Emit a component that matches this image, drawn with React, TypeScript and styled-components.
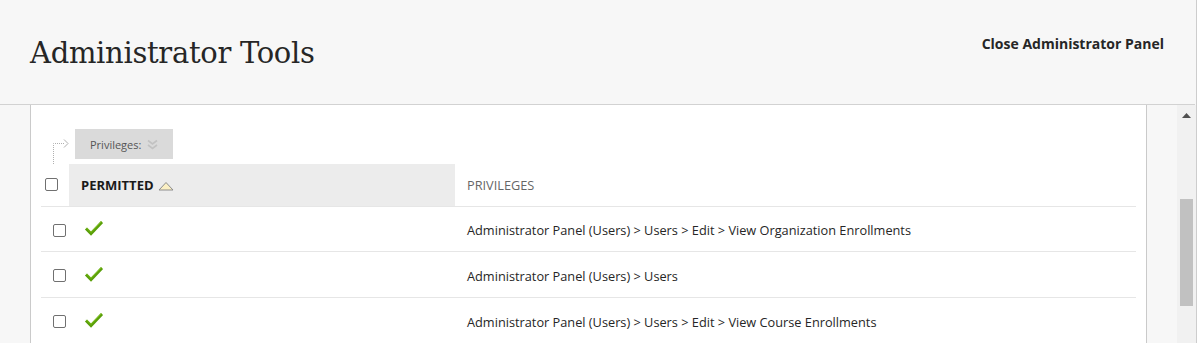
import { createGlobalStyle, styled } from 'styled-components';

const GlobalStyle = createGlobalStyle`
  html, body {
    margin: 0;
    padding: 0;
    background: #f7f7f7;
  }
  body {
    font-family: 'Open Sans', 'Liberation Sans', sans-serif;
    color: #262626;
  }
`;

const Page = styled.div`
  width: 1197px;
  height: 343px;
  box-sizing: border-box;
  border-right: 1px solid #cdcdcd;
  background: #f7f7f7;
  display: flex;
  flex-direction: column;
  overflow: hidden;
`;

const Header = styled.header`
  height: 104px;
  flex: none;
  border-bottom: 1px solid #d2d2d2;
  margin-right: 1px;
  display: flex;
  justify-content: space-between;
  align-items: flex-start;
  padding: 0 31px 0 30px;
`;

const Title = styled.h1`
  margin: 33px 0 0;
  font-family: 'DejaVu Serif', 'Liberation Serif', serif;
  font-weight: 400;
  font-size: 29px;
  letter-spacing: -0.3px;
  line-height: 40px;
  color: #262626;
`;

const CloseLink = styled.a`
  margin-top: 34px;
  font-size: 14px;
  font-weight: 700;
  color: #262626;
  text-decoration: none;
  cursor: pointer;
`;

const Body = styled.div`
  flex: 1;
  display: flex;
  min-height: 0;
`;

const ScrollArea = styled.div`
  flex: 1;
  display: flex;
  padding-left: 30px;
  padding-right: 30px;
`;

const Panel = styled.main`
  flex: 1;
  background: #fff;
  border-left: 1px solid #cacaca;
  border-right: 1px solid #cacaca;
  padding: 24px 10px 0;
`;

const FilterRow = styled.div`
  display: flex;
  align-items: flex-start;
  height: 35px;
`;

const DottedArrow = styled.svg`
  width: 24px;
  height: 26px;
  margin: 9px 0 0 10px;
  flex: none;
`;

const FilterButton = styled.button`
  height: 30px;
  width: 98px;
  border: 0;
  background: #dadada;
  display: flex;
  align-items: center;
  gap: 6px;
  padding: 0 0 0 15px;
  font-family: inherit;
  font-size: 11px;
  color: #555;
  cursor: pointer;
`;

const Table = styled.table`
  width: 100%;
  border-collapse: collapse;
`;

const HeadCell = styled.th<{ $active?: boolean; $width?: number }>`
  height: 42px;
  padding: 0 12px;
  text-align: left;
  font-size: ${(p) => (p.$active ? 13 : 12.75)}px;
  font-weight: ${(p) => (p.$active ? 700 : 400)};
  color: ${(p) => (p.$active ? '#1a1a1a' : '#666')};
  background: ${(p) => (p.$active ? '#ececec' : 'transparent')};
  width: ${(p) => (p.$width ? `${p.$width}px` : 'auto')};
  border-bottom: 1px solid #e6e6e6;
  text-transform: uppercase;
  box-sizing: border-box;
`;

const CheckHeadCell = styled.th`
  width: 28px;
  padding: 0 0 0 4px;
  text-align: left;
  border-bottom: 1px solid #e6e6e6;
  box-sizing: border-box;
`;

const Row = styled.tr`
  height: 45.5px;
  border-bottom: 1px solid #e6e6e6;
  &:last-child {
    border-bottom: 0;
  }
`;

const Cell = styled.td<{ $pad?: number }>`
  padding: 3px 0 0 ${(p) => p.$pad ?? 12}px;
  font-size: 12.75px;
  color: #262626;
  vertical-align: middle;
`;

const Box = styled.span<{ $offset?: number }>`
  display: block;
  width: 11px;
  height: 11px;
  border: 1px solid #707070;
  border-radius: 2px;
  background: #fff;
  margin-left: ${(p) => p.$offset ?? 0}px;
`;

const SortArrow = styled.svg`
  width: 16px;
  height: 10px;
  margin-left: 4px;
  vertical-align: -1px;
`;

const Scrollbar = styled.div`
  width: 19px;
  flex: none;
  background: #f1f1f1;
  display: flex;
  flex-direction: column;
  align-items: center;
`;

const ScrollUp = styled.svg`
  width: 9px;
  height: 5px;
  margin-top: 8px;
`;

const Thumb = styled.div`
  width: 13px;
  height: 107px;
  margin-top: 81px;
  background: #c1c1c1;
`;

const privileges = [
  'Administrator Panel (Users) > Users > Edit > View Organization Enrollments',
  'Administrator Panel (Users) > Users',
  'Administrator Panel (Users) > Users > Edit > View Course Enrollments',
];

function Check() {
  return (
    <svg width='20' height='16' viewBox='0 0 20 16'>
      <path d='M2 8.5 L7 13.5 L18 2' fill='none' stroke='#5a9f0a' strokeWidth='3' />
      <path d='M2.6 7.9 L7 12.3 L17.4 1.4' fill='none' stroke='#7ec11c' strokeWidth='1' />
    </svg>
  );
}

export default function App() {
  return (
    <>
      <GlobalStyle />
      <Page>
        <Header>
          <Title>Administrator Tools</Title>
          <CloseLink>Close Administrator Panel</CloseLink>
        </Header>
        <Body>
          <ScrollArea>
            <Panel>
              <FilterRow>
                <DottedArrow viewBox='0 0 24 26'>
                  <path
                    d='M2.5 26 V5.5 H14'
                    fill='none'
                    stroke='#b0b0b0'
                    strokeWidth='1'
                    strokeDasharray='1 1'
                  />
                  <path d='M13 1.5 L17 5.5 L13 9.5' fill='none' stroke='#b0b0b0' strokeWidth='1' />
                </DottedArrow>
                <FilterButton>
                  Privileges:
                  <svg width='11' height='11' viewBox='0 0 11 11'>
                    <path d='M1 1.5 L5.5 5 L10 1.5 M1 6 L5.5 9.5 L10 6' fill='none' stroke='#c2c2c2' strokeWidth='1.6' />
                  </svg>
                </FilterButton>
              </FilterRow>
              <Table>
                <thead>
                  <tr>
                    <CheckHeadCell>
                      <Box />
                    </CheckHeadCell>
                    <HeadCell $active $width={386}>
                      Permitted
                      <SortArrow viewBox='0 0 16 10'>
                        <path d='M1 9 L8 1.5 L15 9 Z' fill='#fbf0c4' stroke='#8d8d8d' strokeWidth='1' />
                      </SortArrow>
                    </HeadCell>
                    <HeadCell>Privileges</HeadCell>
                  </tr>
                </thead>
                <tbody>
                  {privileges.map((p) => (
                    <Row key={p}>
                      <Cell $pad={0}>
                        <Box $offset={12} />
                      </Cell>
                      <Cell $pad={15}>
                        <Check />
                      </Cell>
                      <Cell>{p}</Cell>
                    </Row>
                  ))}
                </tbody>
              </Table>
            </Panel>
          </ScrollArea>
          <Scrollbar>
            <ScrollUp viewBox='0 0 9 5'>
              <path d='M0 5 L4.5 0 L9 5 Z' fill='#505050' />
            </ScrollUp>
            <Thumb />
          </Scrollbar>
        </Body>
      </Page>
    </>
  );
}
